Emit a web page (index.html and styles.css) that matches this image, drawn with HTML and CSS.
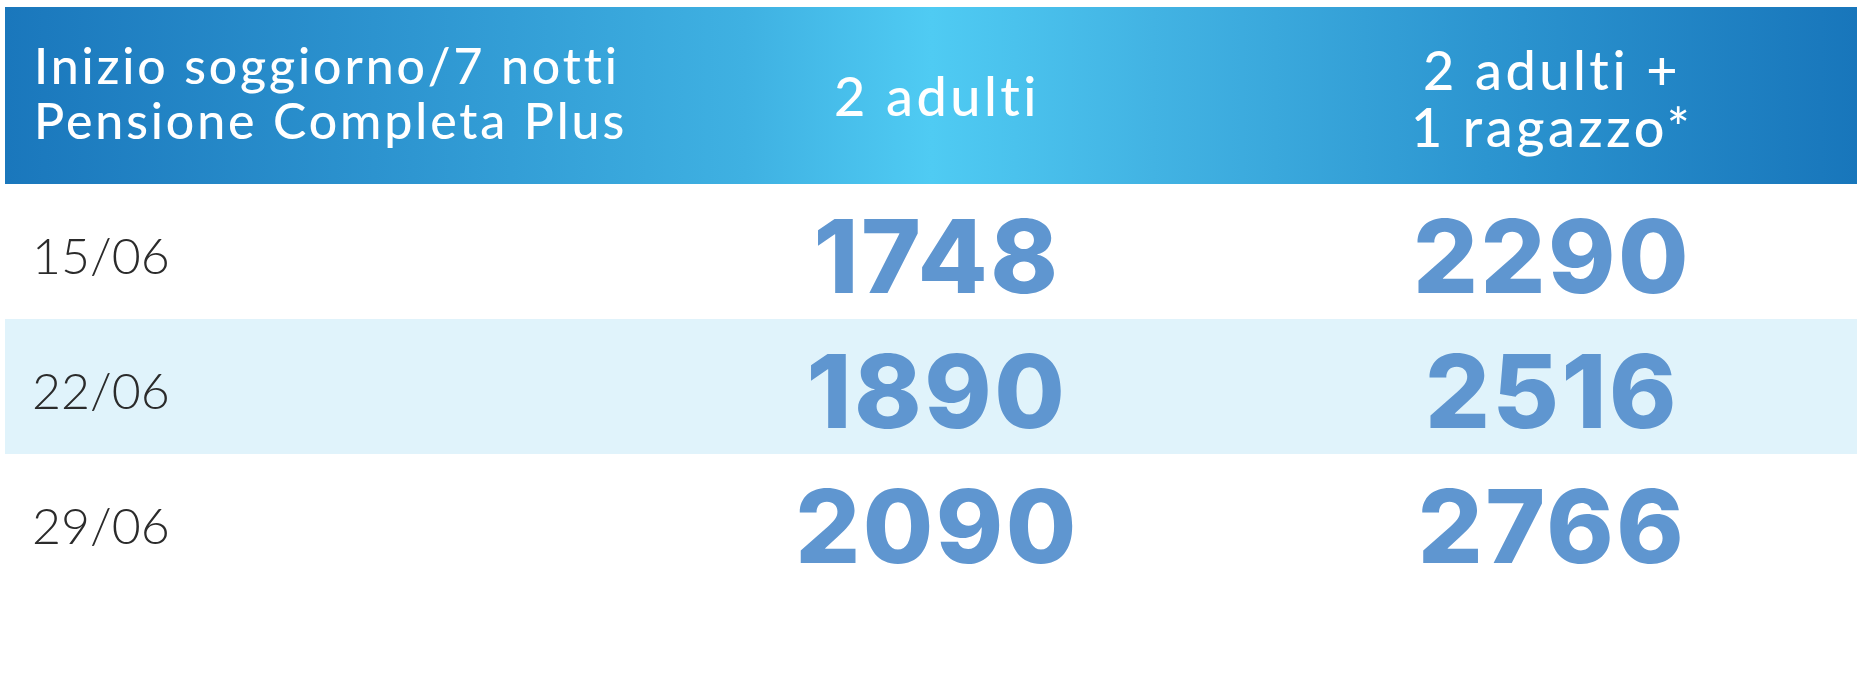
FILE: index.html
```html
<!DOCTYPE html>
<html lang="it">
<head>
<meta charset="utf-8">
<title>Prezzi</title>
<link rel="stylesheet" href="styles.css">
</head>
<body>
<div class="page">
  <div class="table">
    <div class="row head">
      <div class="cell c1">Inizio soggiorno/7 notti<br>Pensione Completa Plus</div>
      <div class="cell c2">2 adulti</div>
      <div class="cell c3">2 adulti +<br>1 ragazzo*</div>
    </div>
    <div class="row">
      <div class="cell date">15/06</div>
      <div class="cell num">1748</div>
      <div class="cell num">2290</div>
    </div>
    <div class="row alt">
      <div class="cell date">22/06</div>
      <div class="cell num">1890</div>
      <div class="cell num">2516</div>
    </div>
    <div class="row">
      <div class="cell date">29/06</div>
      <div class="cell num">2090</div>
      <div class="cell num">2766</div>
    </div>
  </div>
</div>
</body>
</html>
```

FILE: styles.css
```css
html, body {
  margin: 0;
  padding: 0;
  background: #ffffff;
}

.page {
  padding: 7px 7px 0 5px;
  font-family: "Lato", "Liberation Sans", sans-serif;
}

.table {
  display: flex;
  flex-direction: column;
}

.row {
  display: grid;
  grid-template-columns: 622px 620px 1fr;
  height: 135px;
  align-items: center;
}

.row.alt {
  background: #e0f3fb;
}

.row.head {
  height: 177px;
  background: linear-gradient(to right, #1a77bc 0%, #2e96d1 22%, #3fb1e2 40%, #4fcbf3 50%, #42b3e3 62%, #2c95d0 80%, #1876bb 100%);
  color: #ffffff;
  font-weight: 500;
}

.head .c1 {
  padding-left: 29px;
  padding-bottom: 6px;
  font-size: 50px;
  line-height: 55px;
  letter-spacing: 2.9px;
  white-space: nowrap;
}

.head .c2,
.head .c3 {
  text-align: center;
  font-size: 54px;
  line-height: 57px;
  letter-spacing: 3.5px;
  white-space: nowrap;
}

.head .c3 {
  padding-top: 4px;
}

.date {
  padding-left: 27px;
  padding-top: 6px;
  font-size: 50px;
  font-weight: 300;
  color: #2b2b2b;
}

.num {
  text-align: center;
  padding-top: 8px;
  font-family: "Inter", "Lato", sans-serif;
  font-size: 102px;
  font-weight: 800;
  color: #5f96d0;
  letter-spacing: 2.5px;
}
```
